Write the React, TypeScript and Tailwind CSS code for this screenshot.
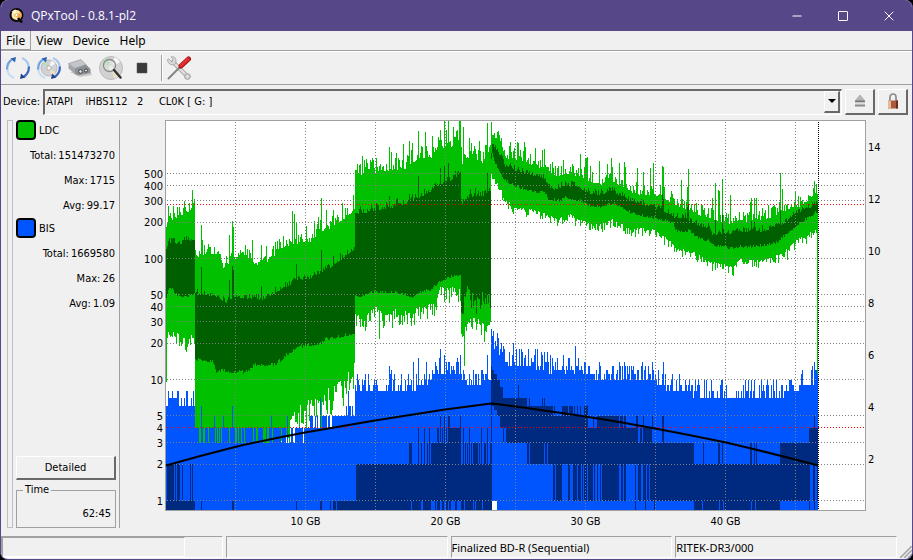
import { Minus, X } from "lucide-react";

type Point = [number, number];

// Chart space: 14 units per GB, 121 units per decade of errors.
const PLOT = { left: 165, top: 121, right: 865, bottom: 510 };
const levelY = (v: number) => 500.5 - 121 * Math.log10(v);
const gbX = (gb: number) => 165.5 + gb * 14;

const noise = (x: number, seed: number) => {
  const n = Math.sin(x * 127.1 + seed * 311.7) * 43758.5453;
  return n - Math.floor(n);
};

const interpolate = (points: Point[], x: number) => {
  for (let i = points.length - 1; i >= 0; i--) {
    const [x0, y0] = points[i];
    if (x >= x0) {
      const next = points[i + 1];
      return next ? y0 + ((next[1] - y0) * (x - x0)) / (next[0] - x0) : y0;
    }
  }
  return points[0][1];
};

const ldcMax: Point[] = [
  [166, 224], [168, 214], [172, 218], [180, 212], [190, 210], [194, 206], [195, 256], [205, 252], [215, 251],
  [219, 252], [221, 266], [227, 262], [233, 257], [245, 252], [252, 258], [256, 264], [260, 258], [270, 259],
  [275, 251], [280, 245], [290, 243], [300, 240], [310, 239], [320, 229], [330, 226], [340, 219], [350, 212],
  [354, 206], [355, 174], [370, 172], [380, 169], [395, 167], [405, 166], [412, 161], [420, 155], [430, 156],
  [440, 149], [450, 145], [460, 137], [462, 162], [465, 156], [475, 156], [482, 160], [490, 146], [491, 133],
  [500, 139], [505, 155], [520, 158], [530, 162], [540, 166], [548, 168], [556, 174], [565, 171], [580, 174],
  [590, 179], [600, 182], [610, 178], [620, 183], [630, 189], [640, 192], [650, 194], [660, 193], [670, 200],
  [680, 204], [690, 208], [700, 213], [712, 216], [720, 219], [730, 222], [740, 217], [750, 220], [760, 217],
  [770, 215], [780, 211], [790, 206], [800, 204], [808, 198], [817, 191], [818, 191],
];

const ldcAvgTop: Point[] = [
  [166, 248], [168, 242], [180, 243], [190, 240], [194, 239], [195, 294], [215, 295], [220, 299], [226, 302],
  [230, 298], [240, 297], [262, 299], [270, 295], [280, 289], [290, 284], [300, 280], [310, 278], [320, 272],
  [330, 267], [340, 260], [350, 252], [354, 248], [355, 213], [365, 213], [375, 210], [390, 207], [405, 204],
  [412, 200], [420, 197], [430, 191], [440, 184], [450, 181], [460, 173], [461, 205], [465, 198], [475, 195],
  [485, 196], [490, 190], [491, 142], [500, 155], [505, 166], [515, 170], [530, 174], [545, 178], [548, 186],
  [555, 190], [565, 185], [580, 188], [590, 193], [600, 194], [610, 191], [625, 197], [635, 202], [650, 206],
  [660, 209], [670, 214], [675, 218], [685, 217], [695, 224], [708, 227], [712, 234], [730, 233], [745, 231],
  [760, 231], [775, 227], [785, 222], [795, 213], [805, 210], [817, 203],
];

const ldcAvgBottom: Point[] = [
  [166, 300], [168, 290], [172, 289], [175, 295], [185, 299], [190, 296], [194, 294], [195, 362], [200, 361],
  [213, 363], [216, 373], [225, 372], [235, 374], [245, 374], [255, 366], [275, 366], [285, 358], [295, 349],
  [305, 347], [320, 345], [325, 341], [340, 338], [350, 335], [354, 337], [355, 297], [362, 297], [370, 293],
  [385, 293], [400, 294], [412, 298], [420, 293], [430, 291], [440, 282], [450, 278], [460, 276], [461, 316],
  [463, 316], [464, 288], [475, 305], [480, 299], [485, 303], [490, 298], [491, 153], [497, 170], [505, 182],
  [520, 189], [535, 193], [545, 194], [548, 200], [560, 202], [563, 198], [580, 202], [590, 207], [600, 208],
  [612, 204], [620, 207], [630, 214], [640, 216], [655, 219], [665, 222], [673, 224], [675, 232], [690, 232],
  [697, 239], [709, 242], [713, 247], [730, 249], [745, 248], [760, 247], [775, 244], [782, 239], [790, 231],
  [800, 224], [810, 217], [817, 213],
];

const ldcMin: Point[] = [
  [166, 370], [167, 332], [175, 328], [180, 336], [187, 340], [194, 332], [195, 443], [275, 443], [286, 425],
  [296, 407], [310, 398], [320, 400], [328, 388], [337, 383], [346, 374], [354, 359], [355, 312], [362, 319],
  [375, 306], [387, 315], [395, 309], [400, 311], [410, 311], [420, 306], [430, 304], [436, 300], [440, 286],
  [450, 287], [460, 289], [461, 334], [470, 318], [480, 319], [485, 328], [490, 322], [491, 171], [495, 181],
  [500, 186], [503, 198], [509, 201], [514, 208], [530, 208], [540, 212], [550, 215], [557, 218], [570, 214],
  [580, 220], [590, 223], [600, 224], [612, 219], [620, 223], [630, 228], [650, 228], [660, 234], [668, 238],
  [675, 248], [690, 250], [700, 255], [710, 262], [720, 263], [733, 267], [740, 259], [760, 260], [770, 257],
  [780, 254], [790, 245], [800, 237], [805, 238], [812, 230], [817, 225],
];

const ldcPeaks: Point[] = [
  [168, 206], [173, 206], [184, 201], [192, 190], [201, 225], [202, 240], [229, 235], [232, 221], [233, 227],
  [252, 240], [261, 245], [266, 246], [292, 211], [294, 214], [296, 223], [306, 226], [314, 221], [318, 217],
  [321, 198], [326, 210], [333, 210], [342, 203], [353, 195], [357, 164], [362, 156], [376, 158], [389, 147],
  [391, 152], [403, 144], [409, 141], [412, 143], [418, 131], [425, 132], [432, 136], [438, 137], [440, 130],
  [444, 121], [446, 130], [448, 121], [453, 127], [456, 131], [459, 121], [460, 121], [463, 127], [469, 138],
  [471, 143], [479, 141], [487, 123], [491, 122], [509, 146], [510, 142], [517, 142], [518, 143], [524, 142],
  [525, 147], [535, 148], [542, 150], [544, 149], [563, 160], [570, 167], [580, 154], [585, 159], [586, 158],
  [587, 157], [590, 166], [599, 161], [607, 164], [611, 158], [612, 167], [619, 163], [624, 162], [625, 167],
  [637, 168], [643, 172], [650, 168], [653, 163], [662, 166], [663, 167], [681, 180], [687, 187], [688, 169],
  [712, 198], [715, 183], [718, 190], [719, 191], [722, 179], [730, 195], [750, 202], [751, 198], [754, 198],
  [756, 198], [768, 205], [774, 205], [780, 173], [782, 189], [795, 191], [814, 181], [816, 184],
];

const avgPeaks: Point[] = [
  [201, 267], [229, 280], [232, 266], [233, 270], [261, 286], [296, 264], [321, 250], [333, 256], [340, 253],
  [389, 196], [397, 198], [409, 194], [418, 176], [440, 168], [444, 166], [448, 163], [487, 173], [491, 159],
  [662, 194], [663, 199], [687, 207], [688, 204], [715, 220], [722, 215], [751, 221], [754, 222], [780, 211],
];

const dipPeaks: Point[] = [[379, 339], [392, 328], [402, 325], [464, 366], [484, 342], [701, 262], [733, 276], [787, 260]];

// BIS maxima as error counts.
const bisMax: Point[] = [
  [166, 6.4], [194, 6.4], [195, 3.7], [300, 3.8], [310, 4.1], [325, 4.5], [338, 5], [354, 5.4], [355, 8.8],
  [375, 9], [390, 8.6], [405, 9.4], [420, 9.4], [430, 11], [440, 12], [450, 12.5], [460, 12], [462, 10.8],
  [475, 10], [490, 10], [491, 21], [496, 20], [502, 17], [508, 14], [520, 14.3], [535, 14], [545, 14],
  [550, 12.3], [570, 12.5], [590, 12], [615, 11.2], [640, 11], [655, 10.5], [665, 9.4], [680, 8.9], [695, 7.9],
  [715, 8], [728, 7.4], [745, 7.7], [760, 7.7], [775, 8], [790, 8.8], [803, 9.8], [817, 10.5],
];

const bisPeaks: Point[] = [
  [168, 8], [178, 8], [187, 8], [201, 6], [214, 5], [223, 5], [232, 6], [271, 5], [287, 5], [320, 7], [348, 8],
  [357, 11], [389, 13], [391, 12], [413, 14], [418, 15], [426, 14], [440, 18], [444, 16], [457, 15], [460, 16],
  [487, 16], [491, 26], [493, 25], [497, 24], [501, 20], [513, 20], [544, 17], [563, 16], [575, 19], [599, 14],
  [624, 14], [652, 14], [663, 14], [672, 11], [688, 9], [704, 10], [722, 10], [745, 10], [754, 10], [773, 10],
  [814, 14], [816, 12],
];

// x, width, upper level, lower level (0 is the bottom of the plot).
const bisAverage: [number, number, number, number][] = [
  [166, 29, 1, 0], [167, 7, 2, 1], [175, 1, 2, 1], [177, 3, 2, 1], [182, 1, 2, 1], [190, 1, 2, 1], [192, 1, 2, 1],
  [201, 1, 1, 0], [232, 2, 1, 0], [296, 1, 1, 0], [320, 2, 1, 0], [330, 1, 1, 0], [333, 3, 1, 0], [337, 2, 1, 0],
  [339, 17, 1, 0], [356, 135, 2, 0], [409, 3, 3, 2], [418, 1, 4, 2], [421, 1, 3, 2], [424, 1, 4, 2],
  [427, 1, 3, 2], [429, 1, 4, 2], [431, 30, 3, 2], [437, 2, 4, 3], [440, 1, 5, 3], [442, 1, 4, 3],
  [444, 1, 5, 3], [446, 1, 4, 3], [448, 2, 5, 3], [450, 11, 4, 3], [460, 1, 5, 3], [463, 1, 4, 2],
  [465, 1, 3, 2], [467, 1, 3, 2], [469, 1, 4, 2], [471, 1, 3, 2], [473, 5, 3, 2], [479, 1, 3, 2],
  [481, 1, 4, 2], [484, 2, 3, 2], [487, 1, 4, 2], [490, 1, 3, 2], [491, 1, 13, 0], [492, 2, 12, 6],
  [494, 3, 11, 5.6], [497, 3, 10, 5], [500, 3, 8.7, 4], [503, 1, 7, 3], [504, 2, 7, 4], [506, 4, 7, 3],
  [510, 17, 7, 3], [518, 1, 9, 7], [527, 25, 6, 3], [529, 1, 7, 6], [527, 2, 3, 2], [530, 14, 3, 2],
  [545, 2, 3, 2], [548, 107, 3, 2], [542, 1, 7, 6], [544, 1, 7, 6], [552, 1, 6, 5], [554, 1, 6, 5],
  [552, 110, 5, 4], [562, 6, 6, 5], [569, 4, 6, 5], [574, 1, 6, 5], [577, 1, 6, 5], [580, 1, 6, 5],
  [584, 4, 6, 5], [552, 103, 4, 3], [553, 2, 2, 1], [556, 6, 2, 1], [568, 2, 2, 1], [573, 4, 2, 1],
  [578, 3, 2, 1], [582, 1, 2, 1], [584, 3, 2, 1], [588, 5, 2, 1], [594, 1, 2, 1], [597, 1, 2, 1],
  [600, 1, 2, 1], [602, 17, 2, 1], [621, 2, 2, 1], [624, 2, 2, 1], [635, 1, 2, 0], [638, 3, 2, 1],
  [643, 2, 2, 1], [645, 1, 2, 0], [647, 2, 2, 1], [650, 168, 2, 1], [655, 39, 3, 2], [654, 1, 2, 0],
  [662, 2, 5, 3], [694, 86, 1, 0], [703, 1, 3, 2], [718, 2, 3, 2], [722, 1, 3, 2], [750, 2, 3, 2], [754, 1, 3, 2],
  [756, 1, 3, 2], [780, 38, 3, 2], [809, 9, 4, 3], [809, 1, 1, 0], [814, 1, 5, 0],
];

// Gaps where the average drops below the surrounding band.
const bisGaps: [number, number, number, number][] = [
  [411, 1, 1, 0], [421, 2, 1, 0], [431, 4, 1, 0], [436, 1, 1, 0], [440, 2, 1, 0], [444, 2, 1, 0], [448, 1, 1, 0],
  [451, 4, 1, 0], [457, 4, 1, 0], [464, 1, 1, 0], [473, 1, 1, 0], [475, 1, 1, 0], [482, 1, 1, 0],
  [588, 5, 5, 4], [594, 3, 5, 4], [619, 1, 5, 4], [623, 1, 5, 4], [626, 10, 5, 4], [638, 5, 5, 4],
  [644, 8, 5, 4], [653, 2, 5, 4], [655, 7, 5, 4], [638, 2, 4, 3], [642, 1, 4, 3], [652, 3, 4, 3],
  [810, 3, 2, 1], [815, 2, 2, 1], [702, 1, 1, 0], [719, 1, 1, 0], [723, 1, 1, 0], [751, 1, 1, 0], [755, 1, 1, 0],
];

const columns = Array.from({ length: 652 }, (_, i) => 166 + i);
const peakAt = (peaks: Point[], x: number) => peaks.find((p) => p[0] === x)?.[1];

const bars = (top: (x: number) => number, bottom: (x: number) => number) =>
  columns.map((x) => `M${x}.5 ${Math.round(top(x))}V${Math.round(bottom(x))}`).join("");

const ldcPath = bars(
  (x) => peakAt(ldcPeaks, x) ?? interpolate(ldcMax, x) - noise(x, 1) ** 2 * (x > 354 && x < 491 ? 17 : 12) + 3,
  (x) => {
    const spread = x < 195 ? 14 : x < 275 ? 0 : x < 355 ? 36 : x < 491 ? 17 : 9;
    return peakAt(dipPeaks, x) ?? interpolate(ldcMin, x) + noise(x, 2) ** 2 * spread;
  },
);
const ldcAvgPath = bars(
  (x) => peakAt(avgPeaks, x) ?? interpolate(ldcAvgTop, x) - noise(x, 3) ** 2 * (x > 354 && x < 491 ? 9 : 6) + 1,
  (x) => {
    if (x > 463 && x < 491) return interpolate(ldcAvgBottom, x) + (noise(x, 4) - 0.5) * 20;
    const step = x > 194 && x < 355 ? 4 : 3;
    return interpolate(ldcAvgBottom, x) - noise(x, 4) ** 2 * step;
  },
);
const bisPath = bars(
  (x) => {
    const base = interpolate(bisMax, x);
    const low = x > 194 && x < 355;
    const swing = low ? (noise(x, 5) - 0.5) * 1.4 : (noise(x, 5) ** 2 - 0.3) * base * 0.4;
    const value = peakAt(bisPeaks, x) ?? Math.round(base + swing);
    return levelY(Math.max(3, value));
  },
  () => PLOT.bottom,
);

const rects = (items: [number, number, number, number][]) =>
  items
    .map(([x, w, hi, lo]) => {
      const top = Math.round(levelY(hi));
      const bottom = lo ? Math.round(levelY(lo)) : PLOT.bottom;
      return `M${x} ${top}h${w}V${bottom}h${-w}z`;
    })
    .join("");

const errorTicks = [500, 400, 300, 200, 100, 50, 40, 30, 20, 10, 5, 4, 3, 2, 1];
const speedTicks = [14, 12, 10, 8, 6, 4, 2];

function ErrorChart() {
  return (
    <svg
      viewBox="120 118 792 418"
      preserveAspectRatio="xMinYMin meet"
      className="h-full w-full fill-black font-['DejaVu_Sans_Condensed','Noto_Sans',sans-serif] text-[11px]"
      role="img"
      aria-label="LDC and BIS errors"
    >
      <g shapeRendering="crispEdges" fill="none">
        <rect x="166" y="121" width="699" height="389" fill="#fff" />
        <path d={ldcPath} stroke="#00c000" />
        <path d={ldcAvgPath} stroke="#006000" />
        <path d="M817.5 226V510" stroke="#00c000" />
        <path d={bisPath} stroke="#0055ff" />
        <path d={rects(bisAverage)} fill="#002a80" />
        <path d={rects(bisGaps)} fill="#0055ff" />
        <rect x="492" y="501" width="5" height="9" fill="#fff" />
        <g stroke="#808080" strokeDasharray="1 2">
          {errorTicks.filter((v) => v !== 4).map((v) => (
            <path key={v} d={`M167 ${Math.floor(levelY(v)) + 0.5}H864`} />
          ))}
          {[5, 10, 15, 20, 25, 30, 35, 40, 45].map((gb) => (
            <path key={gb} d={`M${gbX(gb)} 122V510`} />
          ))}
        </g>
        <path d="M167 204.5H864M167 427.5H864" stroke="#ff0000" strokeDasharray="1 2" />
        <path d="M818.5 122V510" stroke="#000" strokeDasharray="1 1" />
        <rect x="165.5" y="120.5" width="700" height="390" stroke="#a0a0a0" />
      </g>
      <path
        d="M166 465.5Q199 456 235 447Q270 439 305 432.500Q375 420 445 409.500L491 403.500Q515 406 540 410Q600 418 655 428.500Q690 435 726 442.500Q775 454 818 465.500"
        fill="none"
        stroke="#000"
        strokeWidth="2"
      />
      <g textAnchor="end">
        {errorTicks.map((v) => (
          <text key={v} x="163" y={Math.round(levelY(v)) + 4}>{v}</text>
        ))}
      </g>
      {speedTicks.map((v) => (
        <text key={v} x="868" y={511 - v * 26 + 4}>{v}</text>
      ))}
      <g textAnchor="middle">
        {[10, 20, 30, 40].map((gb) => (
          <text key={gb} x={gbX(gb)} y="525">{gb} GB</text>
        ))}
      </g>
    </svg>
  );
}

function Disc({ cx = 12, cy = 12, r = 9 }) {
  return (
    <g>
      <circle cx={cx} cy={cy} r={r} fill="#d2d2d2" stroke="#aaa" strokeWidth=".7" />
      <path d={`M${cx} ${cy}L${cx - r * 0.8} ${cy - r * 0.55}A${r} ${r} 0 0 1 ${cx - r * 0.3} ${cy - r * 0.95}z`} fill="#b9dcc0" />
      <path d={`M${cx} ${cy}L${cx + r * 0.3} ${cy - r * 0.95}A${r} ${r} 0 0 1 ${cx + r * 0.8} ${cy - r * 0.55}z`} fill="#f6f6f6" />
      <path d={`M${cx} ${cy}L${cx + r * 0.8} ${cy + r * 0.55}A${r} ${r} 0 0 1 ${cx + r * 0.3} ${cy + r * 0.95}z`} fill="#eee0c8" />
      <circle cx={cx} cy={cy} r={r * 0.28} fill="#f5f5f5" stroke="#999" strokeWidth=".7" />
    </g>
  );
}

function CycleArrows() {
  return (
    <g fill="none" strokeWidth="2.200">
      <path d="M8 22A11 11 0 0 1 1.200 13" stroke="#c3dcf4" />
      <path d="M1.200 13.500A11 11 0 0 1 6 3.500" stroke="#6ea4e2" />
      <path d="M4.500 2.500L10 1L9 6.500z" fill="#2f62b4" stroke="none" />
      <path d="M16 2A11 11 0 0 1 22.800 11" stroke="#a9c8ee" />
      <path d="M22.800 10.500A11 11 0 0 1 18 20.500" stroke="#3d68bd" />
      <path d="M19.500 21.500L14 23L15 17.500z" fill="#213f93" stroke="none" />
    </g>
  );
}

function RefreshIcon() {
  return <svg viewBox="0 0 24 24" className="size-6"><CycleArrows /></svg>;
}

function RescanIcon() {
  return <svg viewBox="0 0 24 24" className="size-6"><Disc r={8} /><CycleArrows /></svg>;
}

function DriveIcon() {
  return (
    <svg viewBox="0 0 24 24" className="size-6">
      <path d="M2 16L22 14.500L24 19L12 21z" fill="#c8c8c8" />
      <path d="M.500 7.500L13 3.500L18 8.500L7 12.500z" fill="#c2c6cb" stroke="#92969b" strokeWidth=".6" />
      <path d="M.500 7.500L7 12.500V18L.500 12.500z" fill="#a2a6ab" />
      <path d="M7 12.500L18 8.500L22.500 13V17L10 19.500L7 18z" fill="#8b9096" />
      <circle cx="12.500" cy="15.500" r="1.800" fill="#e8e8e8" stroke="#444" />
      <circle cx="18" cy="14.500" r="1.600" fill="#d8d8d8" stroke="#444" />
    </svg>
  );
}

function InspectIcon() {
  return (
    <svg viewBox="0 0 24 24" className="size-6">
      <Disc r={11.5} />
      <circle cx="10.500" cy="9.500" r="6" fill="#e5eadf" fillOpacity=".6" stroke="#8b8b8b" strokeWidth="1.300" />
      <path d="M7 9L10 6" stroke="#b9dcc0" strokeWidth="2" />
      <path d="M15 14L21.500 21.500" stroke="#333" strokeWidth="2.500" strokeLinecap="round" />
    </svg>
  );
}

function StopIcon() {
  return <svg viewBox="0 0 24 24" className="size-6"><path d="M7 7h10v10H7z" fill="#3a3a3a" stroke="#555" strokeWidth=".5" /></svg>;
}

function ToolsIcon() {
  return (
    <svg viewBox="0 0 24 24" className="size-6" strokeLinecap="round">
      <path d="M6 6L20 20" stroke="#999" strokeWidth="4" />
      <path d="M6 6L20 20" stroke="#dedede" strokeWidth="2.500" />
      <path d="M2 3L5 6L6 3L4 .800C8 0 10 3 8.500 7.500C6 10 1 9 .500 4z" fill="#d8d8d8" stroke="#999" strokeWidth=".7" />
      <circle cx="20.500" cy="20.500" r="3" fill="#ccc" stroke="#999" strokeWidth=".7" />
      <circle cx="20.500" cy="20.500" r="1" fill="#f0f0f0" />
      <path d="M1.500 22.500L12.500 11.500" stroke="#858585" strokeWidth="2" />
      <path d="M14 10L21.500 3" stroke="#9d1616" strokeWidth="5" />
      <path d="M14 9.500L21 3" stroke="#e52d2d" strokeWidth="3.500" />
    </svg>
  );
}

function EjectIcon() {
  return (
    <svg viewBox="0 0 16 16" className="size-4">
      <path d="M8 2L12.500 7.500H3.500z" fill="#b5b5b5" stroke="#a0a0a0" strokeWidth=".7" />
      <path d="M3 7.500h10v2H3z" fill="#777" />
      <path d="M3 9.500h10v2H3z" fill="#ddd" />
      <path d="M3 11.500h10v2H3z" fill="#8a8a8a" />
    </svg>
  );
}

function LockIcon() {
  return (
    <svg viewBox="0 0 16 16" className="size-4">
      <path d="M5 9V4a3 3 0 0 1 6 0v5" fill="none" stroke="#8b8b8b" strokeWidth="1.700" />
      <path d="M3 7.500h10v8H3z" fill="#a85a3a" />
      <path d="M3 7.500h3v8H3z" fill="#e6b99c" />
      <path d="M11 7.500h2v8h-2z" fill="#66301d" />
    </svg>
  );
}

function AppLogo() {
  return (
    <svg viewBox="0 0 16 16" className="size-4">
      <circle cx="7.500" cy="7" r="6" fill="#fbe2a5" stroke="#080808" strokeWidth="2" />
      <path d="M7.500 7L2.500 4A6 6 0 0 1 7 1.500z" fill="#fff4c8" />
      <path d="M7.500 7L12 4A6 6 0 0 1 10 12z" fill="#f4a94c" />
      <circle cx="7.500" cy="7" r="1.500" fill="#fff" stroke="#bb8239" strokeWidth=".5" />
      <path d="M9 10L13 14.500" stroke="#080808" strokeWidth="2.500" />
    </svg>
  );
}

const raised = "border-t border-l border-r-2 border-b-2 border-t-white border-l-white border-r-[#696969] border-b-[#696969] bg-[#f0f0f0]";
const sunken = "border border-t-[#a0a0a0] border-r-white border-b-white border-l-[#a0a0a0]";

const tools = [
  { label: "Refresh", icon: RefreshIcon },
  { label: "Rescan devices", icon: RescanIcon },
  { label: "Drive", icon: DriveIcon },
  { label: "Scan media", icon: InspectIcon },
  { label: "Stop", icon: StopIcon },
];

const series = [
  { name: "LDC", color: "bg-[#00c000]", total: "151473270", max: "1715", avg: "99.17" },
  { name: "BIS", color: "bg-[#0055ff]", total: "1669580", max: "26", avg: "1.09" },
];

export default function App() {
  return (
    <div className="h-screen bg-black">
      <div className="flex h-full flex-col overflow-hidden rounded-lg border-x border-b border-[#554788] bg-[#f0f0f0] font-['DejaVu_Sans_Condensed','Noto_Sans',sans-serif] text-[11px] text-black">
        <header className="flex h-[31px] shrink-0 items-center bg-[#554788] pl-2 font-['Open_Sans',sans-serif] text-xs text-white">
          <AppLogo />
          <h1 className="ml-1.5 flex-1">QPxTool - 0.8.1-pl2</h1>
          <button aria-label="Minimize" className="flex h-full w-[46px] items-center justify-center"><Minus className="size-3.5" strokeWidth={2} /></button>
          <button aria-label="Maximize" className="flex h-full w-[46px] items-center justify-center"><span className="size-2.5 rounded-[1px] border border-white" /></button>
          <button aria-label="Close" className="flex h-full w-[46px] items-center justify-center"><X className="size-4" strokeWidth={1.5} /></button>
        </header>

        <nav className="flex h-5 shrink-0 border-b border-[#a0a0a0] font-['Noto_Sans',sans-serif] text-xs leading-[19px]">
          <button className="border-r border-b border-[#a0a0a0] px-[5px]">File</button>
          <button className="px-[5px]">View</button>
          <button className="px-[5px]">Device</button>
          <button className="px-[5px]">Help</button>
        </nav>

        <div className="flex h-[34px] shrink-0 items-center border-t border-b border-t-white border-b-[#a0a0a0] pl-[5px]">
          {tools.map(({ label, icon: Icon }) => (
            <button key={label} aria-label={label} className="flex w-[31px]"><Icon /></button>
          ))}
          <div className="mr-1 h-[26px] border-r border-l border-l-[#a0a0a0] border-r-white" />
          <button aria-label="Preferences"><ToolsIcon /></button>
        </div>

        <div className="flex h-[33px] shrink-0 items-center gap-[3px] pr-1 pl-0.5">
          <label htmlFor="device" className="pt-0.5">Device:</label>
          <div className="relative flex-1">
            <select
              id="device"
              className="block h-[26px] w-full appearance-none border-t-2 border-r border-b border-l-2 border-t-[#696969] border-r-white border-b-white border-l-[#696969] bg-[#f0f0f0] pt-px pl-px"
            >
              <option>{"ATAPI\u00a0\u00a0\u00a0 iHBS112\u00a0\u00a0 2\u00a0\u00a0\u00a0\u00a0 CL0K [ G: ]"}</option>
            </select>
            <span className={`pointer-events-none absolute top-0.5 right-0.5 flex h-[22px] w-4 items-center justify-center ${raised}`}>
              <svg viewBox="0 0 8 4" className="w-2"><path d="M0 0h8L4 4z" /></svg>
            </span>
          </div>
          <button aria-label="Eject" className={`flex h-[26px] w-[30px] items-center justify-center ${raised}`}><EjectIcon /></button>
          <button aria-label="Lock" className={`flex h-[26px] w-[30px] items-center justify-center ${raised}`}><LockIcon /></button>
        </div>

        <main className="flex min-h-0 flex-1">
          <div className="mt-0.5 mb-2 ml-1.5 w-1.5 shrink-0 border border-[#c0c0c0]" />
          <aside className="mt-0.5 mb-2 flex w-[107px] shrink-0 flex-col border-r border-[#a0a0a0] pr-[3px] pl-[3px]">
            {series.map((s) => (
              <section key={s.name} className="text-right">
                <div className="mb-[3px] flex h-5 items-center gap-[3px]">
                  <span className={`size-5 rounded-sm border-2 border-black ${s.color}`} />
                  <h2 className="pt-0.5">{s.name}</h2>
                </div>
                <dl className="pr-px leading-[25px]">
                  <div className="flex justify-end gap-0.5"><dt>Total:</dt><dd>{s.total}</dd></div>
                  <div className="flex justify-end gap-0.5"><dt>Max:</dt><dd>{s.max}</dd></div>
                  <div className="flex justify-end gap-0.5"><dt>Avg:</dt><dd>{s.avg}</dd></div>
                </dl>
              </section>
            ))}
            <button className={`mt-auto h-6 shrink-0 pt-0.5 ${raised}`}>Detailed</button>
            <fieldset className="mt-1 h-11 shrink-0 border border-[#a0a0a0] px-1 text-right">
              <legend className="ml-0.5 px-0.5 text-left leading-3">Time</legend>
              <p className="mt-2.5">62:45</p>
            </fieldset>
          </aside>
          <div className="min-w-0 flex-1">
            <ErrorChart />
          </div>
        </main>

        <footer className="flex h-[23px] shrink-0 gap-[3px] pr-5 pb-px font-['Noto_Sans',sans-serif] leading-[22px]">
          <div className={`flex-1 ${sunken}`}>
            <div className={`h-full w-5/6 ${sunken}`} />
          </div>
          <div className={`flex-1 ${sunken}`} />
          <div className={`flex-1 truncate ${sunken}`}>Finalized BD-R (Sequential)</div>
          <div className={`flex-1 truncate ${sunken}`}>RITEK-DR3/000</div>
          <svg viewBox="0 0 12 12" className="-mr-5 size-3 self-end">
            <path d="M0 12L12 0M4 12L12 4M8 12L12 8" stroke="#a0a0a0" strokeWidth="1.500" />
          </svg>
        </footer>
      </div>
    </div>
  );
}
